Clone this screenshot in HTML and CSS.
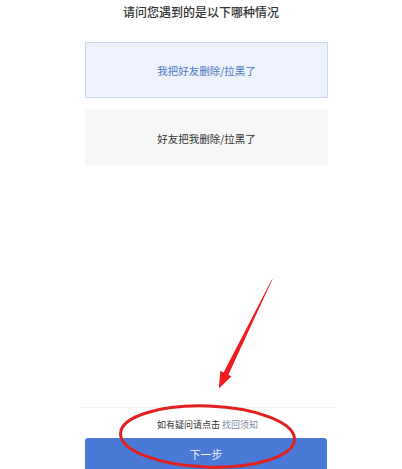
FILE: index.html
```html
<!DOCTYPE html>
<html lang="zh-CN">
<head>
    <meta charset="UTF-8">
    <meta name="viewport" content="width=device-width, initial-scale=1.0">
    <title>找回好友</title>
    <link rel="stylesheet" href="styles.css">
</head>
<body>
    <div class="page">
        <h2 class="title">请问您遇到的是以下哪种情况</h2>
        <div class="options">
            <div class="option active">我把好友删除/拉黑了</div>
            <div class="option">好友把我删除/拉黑了</div>
        </div>
        <div class="spacer"></div>
        <div class="footer">
            <p class="tip">如有疑问请点击 <a href="#" class="tip-link">找回须知</a></p>
            <button class="next-btn">下一步</button>
        </div>
    </div>
    <svg class="marks" width="402" height="469" viewBox="0 0 402 469">
        <polygon class="arrow" points="272.6,279 271.8,279.4 223.6,372.4 220.4,370.8 218.8,388.5 231.4,376.4 228.4,374.8"/>
        <ellipse class="ring" cx="207.5" cy="436.5" rx="87" ry="30.5" transform="rotate(2 207.5 436.5)"/>
    </svg>
</body>
</html>
```

FILE: styles.css
```css
* { box-sizing: border-box; margin: 0; padding: 0; }
body { font-family: "Noto Sans CJK SC", "Noto Sans", sans-serif; background: #fff; color: #333; }
.page { height: 100vh; display: flex; flex-direction: column; overflow: hidden; }
.title { text-align: center; font-size: 12px; line-height: 16px; font-weight: 500; color: #333; padding-top: 4px; }
.options { display: flex; flex-direction: column; gap: 12px; padding: 0 74px 0 85px; margin-top: 22px; }
.option { height: 56px; display: flex; align-items: center; justify-content: center; font-size: 10.5px; color: #333; background: #f7f7f7; }
.option.active { background: #edf2fd; border: 1px solid #c9d6ee; color: #4b77c2; }
.spacer { flex: 1; }
.footer { margin: 0 67px 0 80px; border-top: 1px solid #f1f1f1; }
.tip { text-align: center; font-size: 9px; line-height: 12px; color: #333; padding: 11px 0 7px; }
.tip-link { color: #7f8ba3; text-decoration: none; }
.next-btn { display: block; width: 242px; height: 31px; margin-left: 5px; border: none; border-radius: 3px 3px 0 0; background: #4a79d8; color: #eef3ff; font-family: inherit; font-size: 11px; }
.marks { position: absolute; left: 0; top: 0; pointer-events: none; }
.arrow { fill: #ee1c1c; }
.ring { fill: none; stroke: #e0211f; stroke-width: 3; }
```
